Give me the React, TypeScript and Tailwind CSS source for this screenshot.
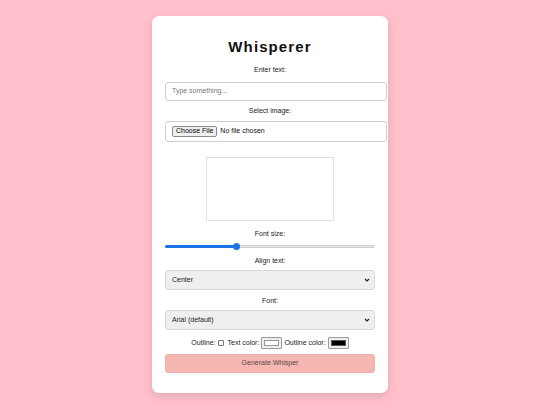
import React from "react";

const label = "text-[7px] leading-[9px] text-[#222] text-center";

export default function App() {
  return (
    <div className="w-[540px] h-[405px] bg-[#ffc0cb] flex justify-center pt-[16px] overflow-hidden" style={{ fontFamily: '"Liberation Sans", Arial, sans-serif' }}>
      <div className="w-[236px] h-[377px] bg-white rounded-[7px] shadow-[0_3px_10px_rgba(0,0,0,0.12)] px-[13px] pt-[22px] flex flex-col items-center">
        <h1 className="text-[15px] leading-[18px] font-bold tracking-[1.1px] text-[#111] m-0">Whisperer</h1>
        <div className={`${label} mt-[8.5px]`}>Enter text:</div>
        <div className="self-start mt-[8px] w-[222px] h-[19px] border border-[#cfcfcf] rounded-[3px] flex items-center px-[6px] text-[7px] text-[#777]">
          Type something...
        </div>
        <div className={`${label} mt-[5.5px]`}>Select image:</div>
        <div className="self-start mt-[5.5px] w-[222px] h-[21px] border border-[#cfcfcf] rounded-[3px] flex items-center pl-[6px] text-[7px] text-[#111]">
          <span className="h-[11px] px-[3px] flex items-center border border-[#8a8a8a] bg-[#efefef] rounded-[2px] text-[7px] text-black">Choose File</span>
          <span className="ml-[3px]">No file chosen</span>
        </div>
        <div className="mt-[15px] w-[128px] h-[64px] border border-[#e2e2e2]" />
        <div className={`${label} mt-[8px]`}>Font size:</div>
        <div className="mt-[4.5px] w-[210px] h-[8px] relative flex items-center">
          <div className="w-full h-[3px] rounded-full bg-[#e8e8e8] border border-[#cfcfcf]" />
          <div className="absolute left-0 top-[2.5px] h-[3px] w-[71px] rounded-full bg-[#1a73e8]" />
          <div className="absolute left-[68px] top-[0.5px] w-[7px] h-[7px] rounded-full bg-[#1a73e8]" />
        </div>
        <div className={`${label} mt-[5.5px]`}>Align text:</div>
        <div className="mt-[5.5px] w-[210px] h-[20px] bg-[#efefef] border border-[#d8d8d8] rounded-[3px] flex items-center justify-between pl-[6px] pr-[4px] text-[7px] text-[#222]">
          <span>Center</span>
          <svg width="6" height="6" viewBox="0 0 6 6"><path d="M1 2 L3 4 L5 2" stroke="#222" strokeWidth="1.2" fill="none" /></svg>
        </div>
        <div className={`${label} mt-[5.5px]`}>Font:</div>
        <div className="mt-[5.5px] w-[210px] h-[20px] bg-[#efefef] border border-[#d8d8d8] rounded-[3px] flex items-center justify-between pl-[6px] pr-[4px] text-[7px] text-[#222]">
          <span>Arial (default)</span>
          <svg width="6" height="6" viewBox="0 0 6 6"><path d="M1 2 L3 4 L5 2" stroke="#222" strokeWidth="1.2" fill="none" /></svg>
        </div>
        <div className="mt-[7px] h-[12px] flex items-center text-[7px] text-[#222]">
          <span>Outline:</span>
          <span className="ml-[3px] w-[6px] h-[6px] border border-[#777] rounded-[1px] bg-white" />
          <span className="ml-[3px]">Text color:</span>
          <span className="ml-[2px] w-[21px] h-[12px] border border-[#9a9a9a] bg-[#efefef] rounded-[1px] p-[2px] flex">
            <span className="flex-1 bg-white border border-[#999]" />
          </span>
          <span className="ml-[2px]">Outline color:</span>
          <span className="ml-[2px] w-[21px] h-[12px] border border-[#9a9a9a] bg-[#efefef] rounded-[1px] p-[2px] flex">
            <span className="flex-1 bg-black border border-[#555]" />
          </span>
        </div>
        <div className="mt-[5px] w-[210px] h-[19px] bg-[#f5b7b1] border border-[#eeb0aa] rounded-[3px] flex items-center justify-center text-[7px] text-[#5a4545]">
          Generate Whisper
        </div>
      </div>
    </div>
  );
}
